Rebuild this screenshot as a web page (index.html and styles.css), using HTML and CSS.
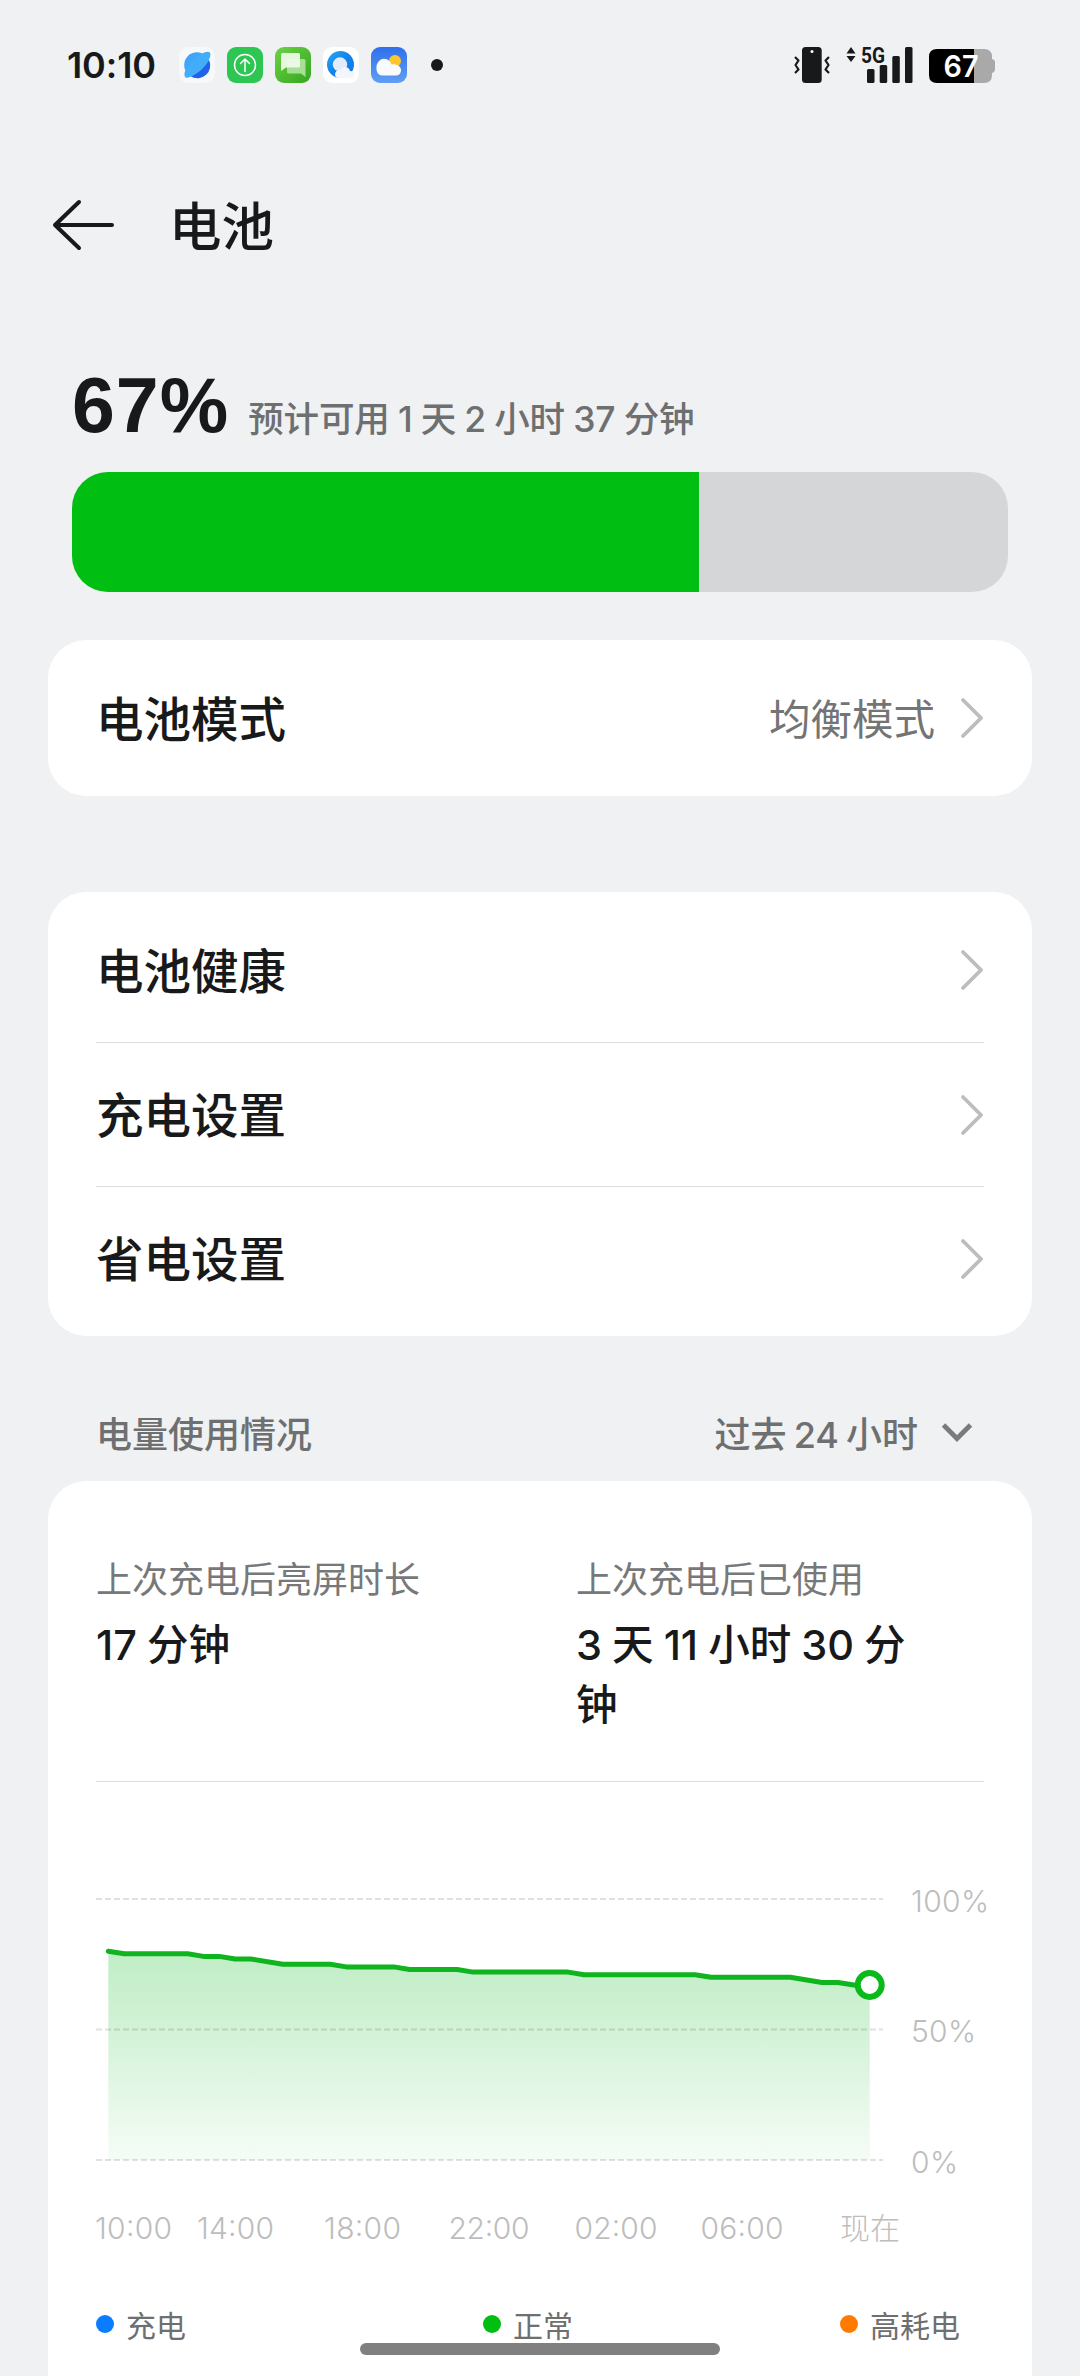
FILE: index.html
```html
<!DOCTYPE html>
<html lang="zh-CN">
<head>
<meta charset="utf-8">
<title>电池</title>
<link rel="stylesheet" href="styles.css">
</head>
<body>
<div class="screen">
  <div class="status">
    <span class="clock">10:10</span>
    <div class="apps">
      <svg class="app" viewBox="0 0 36 36">
        <defs><linearGradient id="ga" x1="0" y1="0" x2="1" y2="1"><stop offset="0" stop-color="#3f9df8"/><stop offset="1" stop-color="#45bdfb"/></linearGradient></defs>
        <rect width="36" height="36" rx="9" fill="#f7f8fa"/>
        <circle cx="18" cy="18" r="12.8" fill="url(#ga)"/>
        <path d="M30 13 A12.8 12.8 0 0 1 12 29.5 Q24 24 30 13Z" fill="#2163e8"/>
        <path d="M22 7 Q30 3 31.5 6.500 Q32 14 21 23 Q11 32 6.500 30.500 Q4 28 7 22Z" fill="#42aefa"/>
      </svg>
      <svg class="app" viewBox="0 0 36 36">
        <rect width="36" height="36" rx="9" fill="#2dc653"/>
        <g fill="none" stroke="#fff" stroke-width="1.500" stroke-linecap="round" stroke-linejoin="round"><circle cx="18" cy="18" r="10.500"/><path d="M18 24.500V12M13.500 16.500L18 12L22.500 16.500"/></g>
      </svg>
      <svg class="app" viewBox="0 0 36 36">
        <defs><linearGradient id="gb" x1="0" y1="0" x2="1" y2="1"><stop offset="0" stop-color="#6cd246"/><stop offset="1" stop-color="#35a61f"/></linearGradient></defs>
        <rect width="36" height="36" rx="9" fill="url(#gb)"/>
        <path d="M13.500 12H29Q30.500 12 30.500 13.500V30L26 26.500H13.500Q12 26.500 12 25V13.500Q12 12 13.500 12Z" fill="#a5e096"/>
        <path d="M7.500 6H23.500Q25 6 25 7.500V19Q25 20.500 23.500 20.500H11L6 24V7.500Q6 6 7.500 6Z" fill="#effbea" fill-opacity=".93"/>
      </svg>
      <svg class="app" viewBox="0 0 36 36">
        <defs><linearGradient id="gc" x1="0" y1="0" x2="1" y2="1"><stop offset="0" stop-color="#22aaf2"/><stop offset=".5" stop-color="#1482ea"/><stop offset="1" stop-color="#1478e4"/></linearGradient></defs>
        <rect width="36" height="36" rx="9" fill="#fff"/>
        <circle cx="17.500" cy="17.500" r="13.500" fill="url(#gc)"/>
        <circle cx="17" cy="17.500" r="7.200" fill="#e3ebf8"/>
        <path d="M12 27Q13 22.500 17 23Q20 18.500 24.500 20.500Q27 22 27 24Q31.500 24 31.500 28Q31 31 28 31H15Q12 30.500 12 27Z" fill="#f3f6fc"/>
      </svg>
      <svg class="app" viewBox="0 0 36 36">
        <defs><linearGradient id="gd" x1="0" y1="0" x2="0" y2="1"><stop offset="0" stop-color="#2f70ea"/><stop offset="1" stop-color="#5f9ff4"/></linearGradient></defs>
        <rect width="36" height="36" rx="9" fill="url(#gd)"/>
        <circle cx="24" cy="14" r="6" fill="#fdc62c"/>
        <path d="M11 28.500A6 6 0 0 1 5.500 22Q5 17 8 14Q11 10.800 15 12Q19 13 20.500 17.500Q24 16.500 27 18.500Q30.500 20.500 30 24Q29 28.500 25 28.500Z" fill="#f8fafe"/>
      </svg>
    </div>
    <span class="more"></span>
    <svg class="signals" width="204" height="70" viewBox="792 30 204 70">
      <g fill="#18191a">
        <rect x="802" y="47" width="19.700" height="36" rx="3.500"/>
        <path d="M846.500 53.500L851 47L855.500 53.500ZM846.500 56L851 62L855.500 56Z"/>
        <rect x="867" y="69" width="7.500" height="14" rx="1.500"/>
        <rect x="879.700" y="65" width="7.500" height="18" rx="1.500"/>
        <rect x="892.300" y="56" width="7.500" height="27" rx="1.500"/>
        <rect x="905" y="47" width="7.500" height="36" rx="1.500"/>
      </g>
      <circle cx="812" cy="51.500" r="1.500" fill="#fff"/>
      <path d="M795 57L798.500 60.500L795.500 65L798.500 69.500L795 73M829 57L825.500 60.500L828.500 65L825.500 69.500L829 73" fill="none" stroke="#18191a" stroke-width="2.200" stroke-linejoin="round"/>
      <text class="net" x="861" y="62.500" textLength="24" lengthAdjust="spacingAndGlyphs">5G</text>
      <path d="M937 49H974V83H937Q929 83 929 75V57Q929 49 937 49Z"/>
      <path d="M974 49H984Q992 49 992 57V59Q995 59.500 995 62V69Q995 72 992 73V75Q992 83 984 83H974Z" fill="#a9a9a9"/>
      <text class="level" x="943.500" y="77" textLength="35" lengthAdjust="spacingAndGlyphs">67</text>
    </svg>
  </div>

  <header class="bar">
    <svg width="64" height="56" viewBox="0 0 64 56"><path d="M29 5L5 28L29 51M5 28H62" fill="none" stroke="#18191a" stroke-width="4" stroke-linecap="round" stroke-linejoin="round"/></svg>
    <h1>电池</h1>
  </header>

  <section class="summary">
    <div class="headline"><b>67%</b><span>预计可用 1 天 2 小时 37 分钟</span></div>
    <div class="meter"><div class="meter-fill" style="width:67%"></div></div>
  </section>

  <section class="card mode">
    <div class="row"><span>电池模式</span><em>均衡模式</em><svg class="chev" viewBox="0 0 24 44"><path d="M3 4L21 22L3 40"/></svg></div>
  </section>

  <section class="card menu">
    <div class="row"><span>电池健康</span><svg class="chev" viewBox="0 0 24 44"><path d="M3 4L21 22L3 40"/></svg></div>
    <div class="row"><span>充电设置</span><svg class="chev" viewBox="0 0 24 44"><path d="M3 4L21 22L3 40"/></svg></div>
    <div class="row"><span>省电设置</span><svg class="chev" viewBox="0 0 24 44"><path d="M3 4L21 22L3 40"/></svg></div>
  </section>

  <div class="section-head">
    <span>电量使用情况</span>
    <span class="range">过去 24 小时</span>
    <svg width="32" height="26" viewBox="0 0 32 26"><path d="M2.500 3L16 16.500L29.500 3" fill="none" stroke="#7a7b7b" stroke-width="4.800"/></svg>
  </div>

  <section class="card usage">
    <div class="stats">
      <div><p class="label">上次充电后亮屏时长</p><p class="value">17 分钟</p></div>
      <div><p class="label">上次充电后已使用</p><p class="value">3 天 11 小时 30 分钟</p></div>
    </div>
    <svg class="chart" width="936" height="478" viewBox="96 1782 936 478">
      <defs><linearGradient id="area" gradientUnits="userSpaceOnUse" x1="0" y1="1951" x2="0" y2="2160"><stop offset="0" stop-color="#0cba22" stop-opacity=".26"/><stop offset=".3" stop-color="#0cba22" stop-opacity=".2"/><stop offset="1" stop-color="#0cba22" stop-opacity=".04"/></linearGradient></defs>
      <path fill="url(#area)" d="M108.300 2160V1951.200L124.200 1953.800H187.600L203.500 1956.400H219.300L235.200 1959H251L282.800 1964.300H330.300L346.200 1966.900H393.800L409.600 1969.500H457.200L473.100 1972.100H568.200L584.100 1974.700H695.100L711 1977.300H790.300L822 1982.500H837.900L853.800 1985H869.700V2160Z"/>
      <path class="grid" d="M96 1899H883M96 2029.500H883M96 2160H883"/>
      <path class="line" d="M108.300 1951.200L124.200 1953.800H187.600L203.500 1956.400H219.300L235.200 1959H251L282.800 1964.300H330.300L346.200 1966.900H393.800L409.600 1969.500H457.200L473.100 1972.100H568.200L584.100 1974.700H695.100L711 1977.300H790.300L822 1982.500H837.900L853.800 1985H869.700"/>
      <circle cx="869.700" cy="1985" r="12" fill="#fff" stroke="#0ab91a" stroke-width="6"/>
      <g class="axis">
        <text x="911" y="1911.500" textLength="78">100%</text>
        <text x="911" y="2042.300" textLength="65">50%</text>
        <text x="911" y="2172.500" textLength="47">0%</text>
        <text x="95" y="2238.500" textLength="77">10:00</text>
        <text x="197" y="2238.500" textLength="77">14:00</text>
        <text x="324" y="2238.500" textLength="77">18:00</text>
        <text x="448.500" y="2238.500" textLength="81">22:00</text>
        <text x="574.500" y="2238.500" textLength="83">02:00</text>
        <text x="700.500" y="2238.500" textLength="83">06:00</text>
        <text x="840" y="2238.500">现在</text>
      </g>
    </svg>
    <div class="legend">
      <div><i class="dot blue"></i><span>充电</span></div>
      <div><i class="dot green"></i><span>正常</span></div>
      <div><i class="dot orange"></i><span>高耗电</span></div>
    </div>
  </section>
  <div class="home"></div>
</div>
</body>
</html>
```
FILE: styles.css
```css
* { box-sizing: border-box; margin: 0; padding: 0; }

body {
  background: #eff1f3;
  color: #18191a;
  font-family: Inter, "Noto Sans CJK SC", sans-serif;
}

.screen {
  position: relative;
  width: 1080px;
  height: 2376px;
  overflow: hidden;
}

svg { display: block; flex: none; }

.status {
  display: flex;
  align-items: center;
  height: 130px;
  padding: 0 84px 0 67px;
}
.clock { width: 112px; font-size: 36px; font-weight: 600; line-height: 44px; letter-spacing: -.1px; }
.apps { display: flex; gap: 12px; }
.app { width: 36px; height: 36px; }
.more { width: 12px; height: 12px; margin-left: 24px; border-radius: 50%; background: #18191a; }
.signals { margin-left: auto; }
.net { font: 700 22px Roboto, sans-serif; fill: #18191a; }
.level { font: 600 30px Inter, sans-serif; fill: #fff; }

.bar { display: flex; align-items: center; height: 190px; padding-left: 50px; }
.bar h1 { margin-left: 55px; padding-top: 4px; font-size: 52.500px; font-weight: 500; line-height: 70px; }

.summary { padding: 45px 72px 0; }
.headline { display: flex; align-items: baseline; height: 107px; }
.headline b { font: 700 77px/80px "Liberation Sans", sans-serif; letter-spacing: 1px; }
.headline span { margin-left: 19px; color: #6e6f70; font-size: 35.500px; font-weight: 500; line-height: 50px; letter-spacing: -.1px; word-spacing: -1.200px; white-space: nowrap; }
.meter { height: 120px; overflow: hidden; border-radius: 36px; background: #d5d6d8; }
.meter-fill { height: 100%; background: #00be12; }

.card { margin: 0 48px; padding: 6px 48px; border-radius: 38px; background: #fff; }
.mode { margin-top: 48px; }
.menu { margin-top: 96px; }
.row { display: flex; align-items: center; height: 144px; font-size: 47.500px; font-weight: 500; }
.row + .row { border-top: 1px solid #dcdddd; }
.row span { margin-right: auto; padding-top: 3px; line-height: 60px; }
.row em { margin-right: 25px; padding-top: 3px; color: #737475; font-size: 41.500px; font-weight: 400; font-style: normal; line-height: 56px; }
.chev { width: 24px; height: 44px; }
.chev path { fill: none; stroke: #bdbdbd; stroke-width: 3.800; stroke-linecap: round; stroke-linejoin: round; }

.section-head {
  display: flex;
  align-items: center;
  height: 145px;
  padding: 53px 107px 0 96px;
  color: #6e6f70;
  font-size: 36px;
  font-weight: 500;
  line-height: 50px;
}
.range { margin: 0 23px 0 auto; word-spacing: -2.500px; }

.usage { height: 960px; padding: 74px 48px 0; }
.stats { display: grid; grid-template-columns: 480px 348px; height: 227px; border-bottom: 1px solid #dcdddd; }
.label { color: #777879; font-size: 36px; line-height: 50px; }
.value { margin-top: 10px; font-size: 41.500px; font-weight: 500; line-height: 60px; word-spacing: -1px; }

.grid { fill: none; stroke: #000; stroke-opacity: .12; stroke-width: 2; stroke-dasharray: 6 3; }
.line { fill: none; stroke: #10b41f; stroke-width: 5; stroke-linecap: round; stroke-linejoin: round; }
.axis { fill: #bdbdbd; font-size: 30px; font-weight: 300; }

.legend { display: grid; grid-template-columns: 387px 357px 1fr; height: 128px; color: #6e6f70; font-size: 30px; line-height: 40px; white-space: nowrap; }
.legend div { display: flex; align-items: center; gap: 12px; }
.legend span { padding-top: 4px; }
.dot { width: 18px; height: 18px; border-radius: 50%; }
.blue { background: #0a7cff; }
.green { background: #00be12; }
.orange { background: #ff7a00; }

.home { position: absolute; left: 360px; top: 2343px; width: 360px; height: 12px; border-radius: 6px; background: #808080; }
```
